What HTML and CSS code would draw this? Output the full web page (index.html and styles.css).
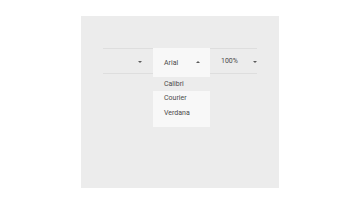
FILE: index.html
```html
<!DOCTYPE html>
<html lang="en">
<head>
    <meta charset="UTF-8">
    <meta name="viewport" content="width=device-width, initial-scale=1.0">
    <title>Font Toolbar</title>
    <link rel="stylesheet" href="styles.css">
</head>
<body>
    <div class="panel">
        <div class="toolbar">
            <div class="cell cell-style">
                <span></span>
                <i class="arrow down"></i>
            </div>
            <div class="cell cell-font open">
                <span>Arial</span>
                <i class="arrow up"></i>
                <ul class="menu">
                    <li class="active">Calibri</li>
                    <li>Courier</li>
                    <li>Verdana</li>
                </ul>
            </div>
            <div class="cell cell-zoom">
                <span>100%</span>
                <i class="arrow down"></i>
            </div>
        </div>
    </div>
</body>
</html>
```

FILE: styles.css
```css
body { margin: 0; background: #fff; font-family: Roboto, "Noto Sans", sans-serif; color: #4a4a4a; }
.panel {
    width: 154px;
    height: 108px;
    margin: 16px 0 0 81px;
    padding: 32px 22px;
    background: #ececec;
}
.toolbar {
    display: flex;
    height: 24px;
    border-top: 1px solid #dedede;
    border-bottom: 1px solid #dedede;
    font-size: 7px;
}
.cell {
    display: flex;
    align-items: center;
    justify-content: space-between;
    box-sizing: border-box;
    padding: 0 11px;
}
.cell-style { width: 50px; }
.cell-font { width: 57px; padding-right: 10px; }
.cell-zoom { width: 47px; padding-right: 0; }
.cell-font.open {
    position: relative;
    margin: -1px 0 -4px;
    background: #f8f8f8;
    z-index: 1;
}
.arrow { width: 0; height: 0; border-left: 2px solid transparent; border-right: 2px solid transparent; }
.arrow.down { border-top: 2px solid #5a5a5a; margin-top: 1px; }
.arrow.up { border-bottom: 2px solid #5a5a5a; margin-top: -1px; }
.menu {
    position: absolute;
    left: 0;
    top: 29px;
    width: 57px;
    margin: 0;
    padding: 0 0 7px;
    list-style: none;
    background: #f8f8f8;
}
.menu li {
    height: 14.3px;
    line-height: 14.3px;
    padding-left: 11px;
}
.menu li.active { background: #ececec; }
```
